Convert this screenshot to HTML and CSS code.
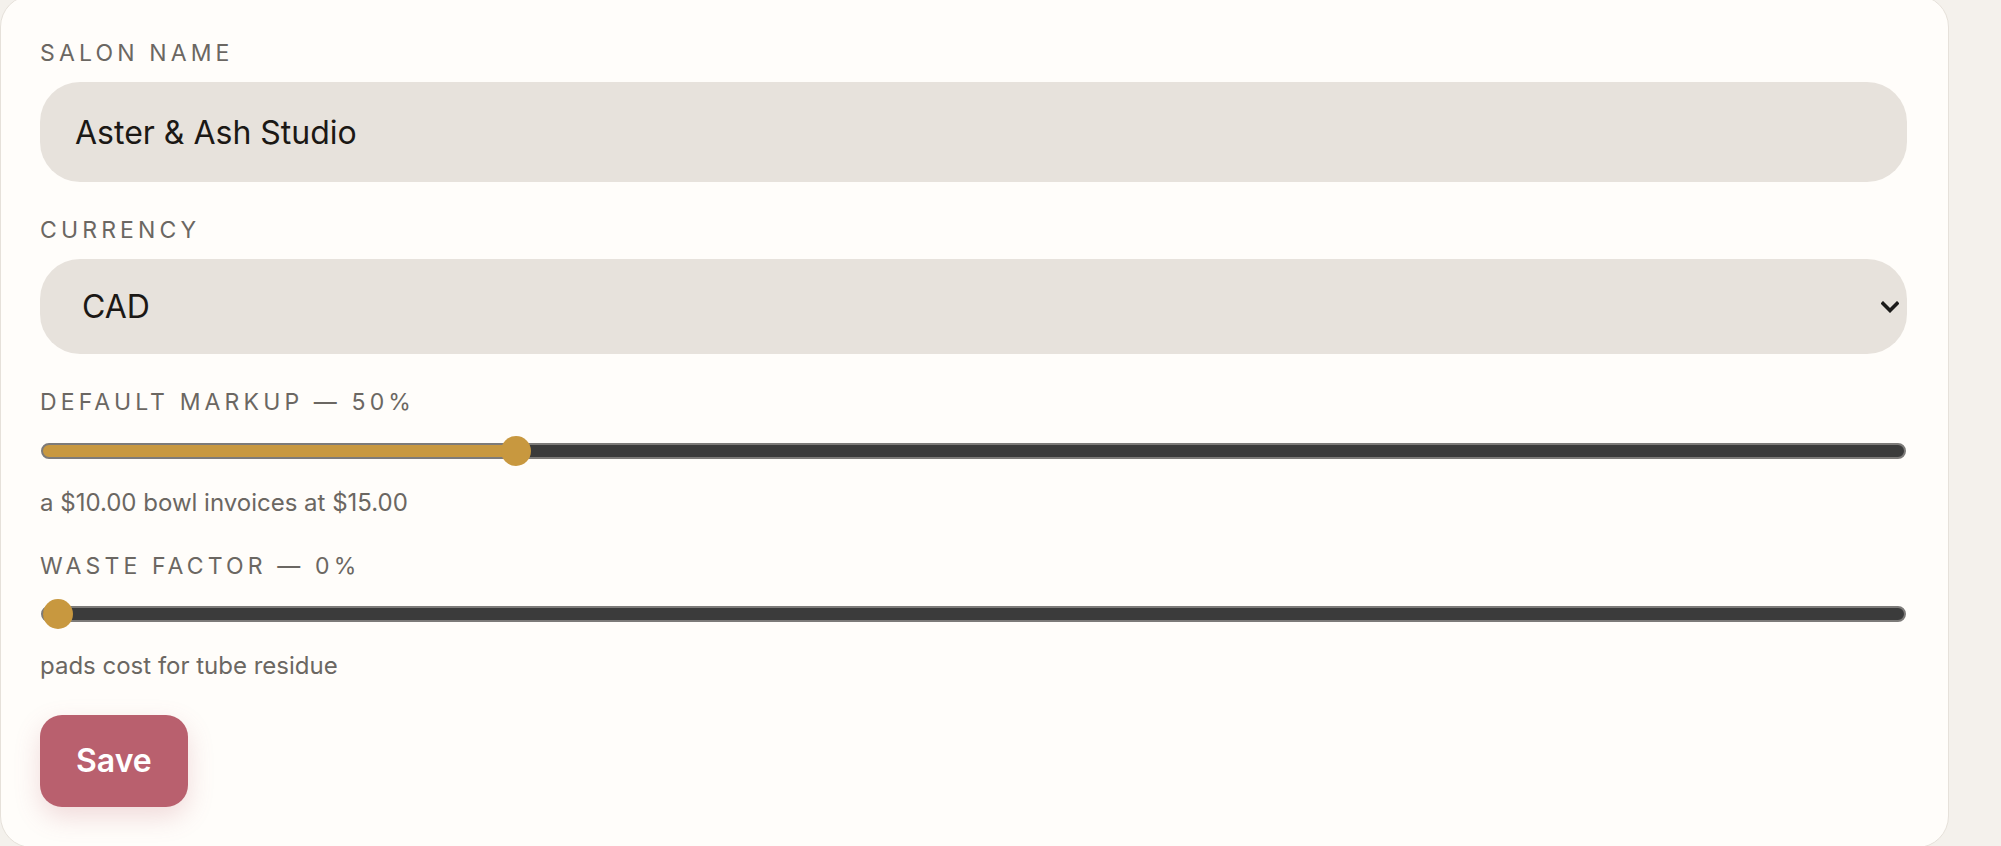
FILE: index.html
```html
<!DOCTYPE html>
<html lang="en">
<head>
<meta charset="utf-8">
<title>Salon settings</title>
<link rel="stylesheet" href="styles.css">
</head>
<body>
<main class="page">
  <form class="card">
    <div class="field">
      <label class="label" for="salon">Salon name</label>
      <input class="text-input" id="salon" type="text" value="Aster &amp; Ash Studio">
    </div>
    <div class="field">
      <label class="label" for="currency">Currency</label>
      <div class="select-wrap">
        <select class="select" id="currency">
          <option>CAD</option>
          <option>USD</option>
          <option>EUR</option>
        </select>
        <svg class="chevron" viewBox="0 0 18 12" width="18" height="12" aria-hidden="true">
          <path d="M2 2.5 L9 9.5 L16 2.5" fill="none" stroke="#1c1b1a" stroke-width="3.6" stroke-linecap="square" stroke-linejoin="miter"/>
        </svg>
      </div>
    </div>
    <div class="field">
      <label class="label" for="markup">Default markup — 50%</label>
      <input class="range" id="markup" type="range" min="0" max="200" value="50" style="--fill: 25.4%">
      <p class="hint">a $10.00 bowl invoices at $15.00</p>
    </div>
    <div class="field">
      <label class="label" for="waste">Waste factor — 0%</label>
      <input class="range" id="waste" type="range" min="0" max="50" value="0" style="--fill: 0%">
      <p class="hint">pads cost for tube residue</p>
    </div>
    <div class="actions">
      <button class="save" type="button">Save</button>
    </div>
  </form>
</main>
</body>
</html>
```

FILE: styles.css
```css
* {
  box-sizing: border-box;
}

html,
body {
  margin: 0;
  padding: 0;
  height: 100%;
  overflow: hidden;
}

body {
  background: #f4f1ec;
  font-family: Inter, "Noto Sans", "Liberation Sans", sans-serif;
  color: #1e1b18;
}

.page {
  display: block;
}

.card {
  width: 1949px;
  margin: -5px 0 0 0;
  background: #fffdfa;
  border: 1px solid #e6e1da;
  border-radius: 32px;
  padding: 43px 41px 40px 39px;
  display: flex;
  flex-direction: column;
  gap: 34px;
}

.field {
  display: flex;
  flex-direction: column;
}

.label {
  font-size: 23px;
  line-height: 28px;
  letter-spacing: 0.18em;
  text-transform: uppercase;
  color: #6b6762;
  margin: 0 0 15px 0;
}

.text-input,
.select {
  width: 100%;
  border: none;
  outline: none;
  background: #e7e2dc;
  color: #1b1815;
  font-family: inherit;
  font-size: 32px;
  border-radius: 40px;
  margin: 0;
}

.text-input {
  height: 100px;
  padding: 0 35px;
}

.select-wrap {
  position: relative;
}

.select {
  height: 95px;
  padding: 0 60px 0 42px;
  -webkit-appearance: none;
  appearance: none;
  display: block;
}

.chevron {
  position: absolute;
  right: 8px;
  top: 42px;
  pointer-events: none;
}

.range {
  -webkit-appearance: none;
  appearance: none;
  background: transparent;
  width: calc(100% - 2px);
  height: 30px;
  margin: 4.5px 1px 0 1px;
  padding: 0;
}

.range::-webkit-slider-runnable-track {
  height: 16px;
  border: 2px solid #7d7b79;
  border-radius: 8px;
  background: linear-gradient(to right, #c8983f var(--fill), #3b3b3b var(--fill));
  box-sizing: border-box;
}

.range::-webkit-slider-thumb {
  -webkit-appearance: none;
  appearance: none;
  width: 30px;
  height: 30px;
  border-radius: 50%;
  background: #c8983f;
  border: none;
  margin-top: -9px;
}

.hint {
  margin: 22px 0 0 0;
  font-size: 24px;
  line-height: 30px;
  color: #6b6762;
}

.actions {
  display: flex;
}

.save {
  font-family: inherit;
  font-size: 32px;
  font-weight: 600;
  line-height: 40px;
  color: #ffffff;
  background: #b9606e;
  border: none;
  border-radius: 22px;
  padding: 26px 36px;
  box-shadow: 0 10px 26px rgba(185, 96, 110, 0.22);
  cursor: pointer;
}
```
